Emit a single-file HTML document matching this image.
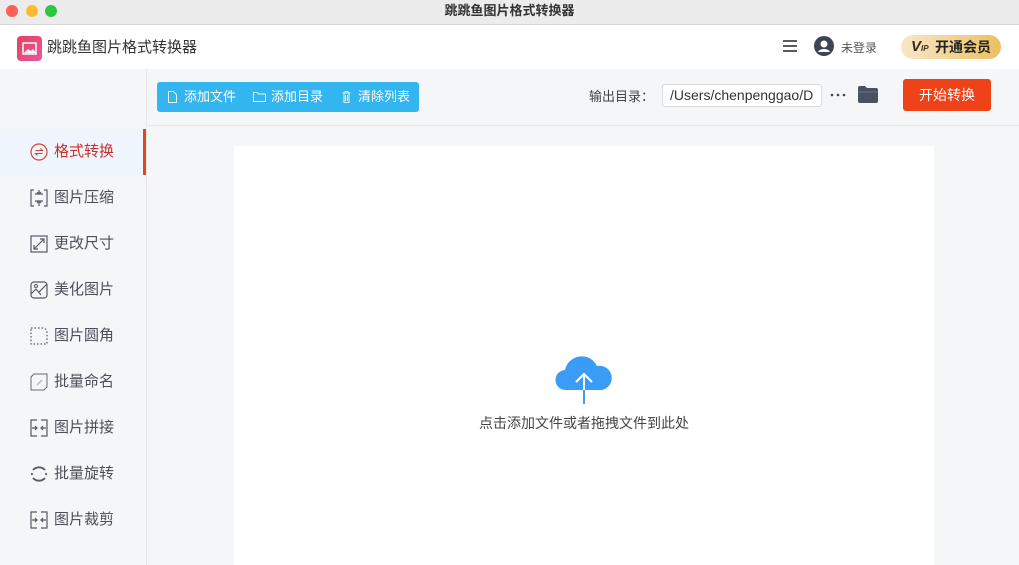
<!DOCTYPE html>
<html><head><meta charset="utf-8"><style>
*{margin:0;padding:0;box-sizing:border-box}
body{width:1019px;height:565px;overflow:hidden;background:#f5f6f8;font-family:"Liberation Sans","Noto Sans CJK SC",sans-serif;position:relative}
.abs{position:absolute}
.tb{left:0;top:0;width:1019px;height:25px;background:#ececec;border-bottom:1px solid #d6d6d6;text-align:center;font-size:13px;font-weight:bold;color:#333;line-height:22px}
.dot{top:5px;width:12px;height:12px;border-radius:50%}
.hd{left:0;top:25px;width:1019px;height:44px;background:#fff}
.side{left:0;top:69px;width:147px;height:496px;border-right:1px solid #e6e8eb}
.item{position:absolute;left:0;width:146px;height:46px;font-size:15px;color:#4a4f58;line-height:46px}
.item span{position:absolute;left:54px}
.item svg{position:absolute;left:30px;top:14px}
.btn{font-size:13px;color:#fff}
</style></head><body>
<div class="abs tb">跳跳鱼图片格式转换器</div>
<div class="abs dot" style="left:6px;background:#fe5f57"></div>
<div class="abs dot" style="left:26px;background:#febc2e"></div>
<div class="abs dot" style="left:45px;background:#28c840"></div>
<div class="abs hd">
 <div class="abs" style="left:17px;top:11px;width:25px;height:25px;border-radius:4px;background:linear-gradient(135deg,#e8405a,#e45aa0)"><svg width="25" height="25"><rect x="6" y="7" width="13" height="11" fill="none" stroke="#fff" stroke-width="1.5"/><path d="M7 17l4-4 3 2 2-2 3 4z" fill="#fff"/></svg></div>
 <div class="abs" style="left:47px;top:11px;font-size:15px;color:#333">跳跳鱼图片格式转换器</div>
 <svg class="abs" style="left:782px;top:14px" width="16" height="14"><path d="M1 2h14M1 7h14M1 12h14" stroke="#444" stroke-width="1.8"/></svg>
 <svg class="abs" style="left:814px;top:11px" width="20" height="20"><circle cx="10" cy="10" r="10" fill="#3d4454"/><circle cx="10" cy="8" r="3.5" fill="#fff"/><path d="M4 16c2-4 10-4 12 0" fill="#fff"/></svg>
 <div class="abs" style="left:841px;top:14px;font-size:12px;color:#555">未登录</div>
 <div class="abs" style="left:901px;top:10px;width:100px;height:24px;border-radius:12px;background:linear-gradient(90deg,#f8e7c8,#eebf62);font-size:14px;color:#222;font-weight:bold;line-height:24px;padding-left:34px">开通会员</div>
 <div class="abs" style="left:911px;top:13px;font-size:15px;font-weight:bold;font-style:italic;color:#3a2a1a">V<span style="font-size:8px">IP</span></div>
</div>
<div class="abs" style="left:147px;top:125px;width:872px;height:1px;background:#e6e8eb"></div>
<div class="abs side"></div>
<div class="abs btn" style="left:157px;top:82px;width:262px;height:30px;background:#33b5f0;border-radius:3px;line-height:30px">
 <svg class="abs" style="left:11px;top:9px" width="9" height="12"><path d="M.5.5h5l3 3v8h-8z" fill="none" stroke="#e8f6fe"/></svg><span class="abs" style="left:27px">添加文件</span>
 <svg class="abs" style="left:96px;top:9px" width="13" height="11"><path d="M.5 1.5h4l1 1.5h7v7.5H.5z" fill="none" stroke="#e8f6fe"/></svg><span class="abs" style="left:114px">添加目录</span>
 <svg class="abs" style="left:185px;top:9px" width="9" height="12"><path d="M.5 2h8M2 2v9.5h5V2M3.5 4v6M5.5 4v6M3 2V.5h3V2" fill="none" stroke="#e8f6fe"/></svg><span class="abs" style="left:201px">清除列表</span>
</div>
<div class="abs" style="left:589px;top:86px;font-size:13px;color:#444">输出目录：</div>
<div class="abs" style="left:662px;top:84px;width:160px;height:23px;background:#fff;border:1px solid #d8dadd;border-radius:3px;font-size:14px;color:#333;line-height:21px;padding-left:7px;overflow:hidden;white-space:nowrap">/Users/chenpenggao/D</div>
<svg class="abs" style="left:830px;top:93px" width="16" height="4"><circle cx="2" cy="2" r="1.3" fill="#444"/><circle cx="8" cy="2" r="1.3" fill="#444"/><circle cx="14" cy="2" r="1.3" fill="#444"/></svg>
<svg class="abs" style="left:858px;top:86px" width="20" height="17"><path d="M0 2q0-2 2-2h5l2 2h9q2 0 2 2v11q0 2-2 2H2q-2 0-2-2z" fill="#4a5163"/><path d="M0 6h20" stroke="#6a7182"/></svg>
<div class="abs" style="left:903px;top:79px;width:88px;height:32px;background:#ef4219;border-radius:3px;color:#fff;font-size:14px;text-align:center;line-height:32px">开始转换</div>

<div class="abs" style="left:0;top:129px;width:146px;height:46px;background:#eef5fc"></div>
<div class="abs" style="left:143px;top:129px;width:3px;height:46px;background:#e3461f"></div>
<div class="item" style="top:129px;color:#c9302c"><svg width="18" height="18"><circle cx="9" cy="9" r="8" fill="none" stroke="#d0453a" stroke-width="1.2"/><path d="M5.5 7.5h7l-2-2M12.5 10.5h-7l2 2" fill="none" stroke="#d0453a" stroke-width="1.1"/></svg><span>格式转换</span></div>
<div class="item" style="top:175px"><svg width="18" height="18"><path d="M4 1H1v16h3M14 1h3v16h-3M5 5h8M5 12h8M9 1v4M9 12v5M7 3l2 2 2-2M7 14l2-2 2 2" fill="none" stroke="#555b66" stroke-width="1.2"/></svg><span>图片压缩</span></div>
<div class="item" style="top:221px"><svg width="18" height="18"><rect x="1" y="1" width="16" height="16" fill="none" stroke="#555b66" stroke-width="1.2"/><path d="M4 14l10-10M10 4h4v4M4 10v4h4" fill="none" stroke="#555b66" stroke-width="1.2"/></svg><span>更改尺寸</span></div>
<div class="item" style="top:267px"><svg width="18" height="18"><rect x="1" y="1" width="16" height="16" rx="3" fill="none" stroke="#555b66" stroke-width="1.2"/><path d="M1 13l5-5 5 6M9 11l8-8" fill="none" stroke="#555b66" stroke-width="1.2"/><circle cx="6" cy="5" r="1.5" fill="none" stroke="#555b66"/></svg><span>美化图片</span></div>
<div class="item" style="top:313px"><svg width="18" height="18"><path d="M1 1h11q5 0 5 5v11H1z" fill="none" stroke="#555b66" stroke-width="1.3" stroke-dasharray="1.5 2"/></svg><span>图片圆角</span></div>
<div class="item" style="top:359px"><svg width="18" height="18"><path d="M4 1h13v13l-3 3H1V4z" fill="none" stroke="#666b75" stroke-width="1"/><path d="M7 12l5-5" stroke="#bbb" stroke-width="1.5"/></svg><span>批量命名</span></div>
<div class="item" style="top:405px"><svg width="18" height="18"><path d="M7 1H1v16h6M11 1h6v16h-6M2 9h5M5 7l2 2-2 2M16 9h-5M13 7l-2 2 2 2" fill="none" stroke="#555b66" stroke-width="1.2"/></svg><span>图片拼接</span></div>
<div class="item" style="top:451px"><svg width="18" height="18"><path d="M3 5a8 8 0 0 1 12 0M15 13a8 8 0 0 1-12 0M2 8a8 8 0 0 0 0 2M16 8a8 8 0 0 1 0 2" fill="none" stroke="#555b66" stroke-width="1.8"/></svg><span>批量旋转</span></div>
<div class="item" style="top:497px"><svg width="18" height="18"><path d="M7 1H1v16h6M11 1h6v16h-6M2 9h5M5 7l2 2-2 2M16 9h-5M13 7l-2 2 2 2" fill="none" stroke="#555b66" stroke-width="1.2"/></svg><span>图片裁剪</span></div>

<div class="abs" style="left:234px;top:146px;width:700px;height:419px;background:#fff"></div>
<svg class="abs" style="left:554px;top:352px" width="60" height="52"><path d="M12 38a10 10 0 0 1-1-20 17 17 0 0 1 32-4 12 12 0 0 1 5 24z" fill="#3b9cf5"/><path d="M30 52V22M22 30l8-8 8 8" fill="none" stroke="#fff" stroke-width="2"/><path d="M30 38v14" stroke="#3b9cf5" stroke-width="2"/></svg>
<div class="abs" style="left:479px;top:413px;font-size:14px;color:#444">点击添加文件或者拖拽文件到此处</div>
</body></html>
